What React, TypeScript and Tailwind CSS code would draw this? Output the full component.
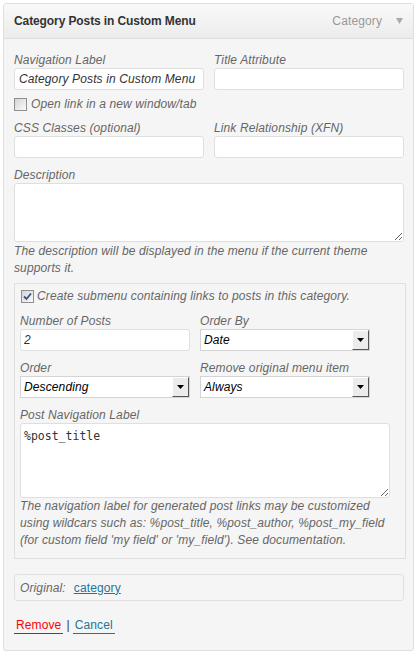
import React from "react";

function Checkbox({ checked }: { checked?: boolean }) {
  return (
    <span className="inline-flex w-[13px] h-[13px] shrink-0 border border-[#8e8f8f] bg-gradient-to-br from-[#d4d4d4] to-[#fbfbfb] items-center justify-center">
      {checked && (
        <svg width="9" height="9" viewBox="0 0 9 9">
          <path d="M1 4.5 L3.5 7 L8 1.5" fill="none" stroke="#3c4d8f" strokeWidth="1.8" />
        </svg>
      )}
    </span>
  );
}

function TextInput({ value, className = "" }: { value?: string; className?: string }) {
  return (
    <input
      readOnly
      defaultValue={value}
      className={`h-[22px] border border-[#dfdfdf] rounded-[3px] bg-white px-[3px] text-[12px] italic text-[#333] outline-none ${className}`}
    />
  );
}

function Select({ value }: { value: string }) {
  return (
    <div className="h-[22px] w-[170px] flex border border-[#d4d4d4] bg-white">
      <span className="flex-1 pl-[3px] leading-[20px] italic text-[12px] text-black">{value}</span>
      <span className="w-[17px] h-full bg-[#ececec] border-t border-l border-t-white border-l-white border-r border-b border-r-[#555] border-b-[#555] flex items-center justify-center">
        <svg width="7" height="4" viewBox="0 0 7 4">
          <path d="M0 0 H7 L3.5 4 Z" fill="#000" />
        </svg>
      </span>
    </div>
  );
}

function Label({ children }: { children: React.ReactNode }) {
  return <div className="text-[12px] leading-[16px] italic text-[#666]">{children}</div>;
}

export default function App() {
  return (
    <div
      className="w-[419px] h-[654px] bg-white pt-[3px] pl-[3px] tracking-[0.12px]"
      style={{ fontFamily: '"Liberation Sans", Arial, sans-serif' }}
    >
      <div className="w-[411px] h-[648px] border border-[#dfdfdf] rounded-[3px] bg-[#f5f5f5] flex flex-col overflow-hidden">
        <div className="h-[35px] shrink-0 border-b border-[#dfdfdf] bg-gradient-to-b from-[#f9f9f9] to-[#ececec] flex items-center justify-between pl-[10px] pr-[10px] pb-[1px]">
          <span className="text-[12px] font-bold text-[#333] tracking-[-0.1px]">Category Posts in Custom Menu</span>
          <span className="flex items-center gap-[14px] text-[12px] text-[#999]">
            Category
            <svg width="7" height="6" viewBox="0 0 7 6">
              <path d="M0 0 H7 L3.5 6 Z" fill="#aaa" />
            </svg>
          </span>
        </div>
        <div className="px-[10px] pt-[13px] flex flex-col">
          <div className="grid grid-cols-[190px_190px] gap-x-[10px]">
            <div className="flex flex-col">
              <Label>Navigation Label</Label>
              <TextInput value="Category Posts in Custom Menu" className="px-[4px]" />
            </div>
            <div className="flex flex-col">
              <Label>Title Attribute</Label>
              <TextInput />
            </div>
          </div>
          <div className="mt-[6px] h-[16px] flex items-center gap-[4px]">
            <Checkbox />
            <span className="text-[12px] italic text-[#666]">Open link in a new window/tab</span>
          </div>
          <div className="mt-[8px] grid grid-cols-[190px_190px] gap-x-[10px]">
            <div className="flex flex-col">
              <Label>CSS Classes (optional)</Label>
              <TextInput />
            </div>
            <div className="flex flex-col">
              <Label>Link Relationship (XFN)</Label>
              <TextInput />
            </div>
          </div>
          <div className="mt-[9px]">
            <Label>Description</Label>
          </div>
          <textarea
            readOnly
            className="w-[390px] h-[59px] border border-[#dfdfdf] rounded-[3px] bg-white outline-none block"
          />
          <div className="mt-[1px] w-[390px] text-[12px] leading-[17px] italic text-[#666]">
            The description will be displayed in the menu if the current theme supports it.
          </div>

          <div className="mt-[6px] w-[392px] border border-[#dfdfdf] pl-[5px] pt-[4px] pb-[9px] flex flex-col">
            <div className="h-[16px] flex items-center gap-[3px] pl-[1px]">
              <Checkbox checked />
              <span className="text-[12px] italic text-[#666]">
                Create submenu containing links to posts in this category.
              </span>
            </div>
            <div className="mt-[9px] grid grid-cols-[170px_170px] gap-x-[10px]">
              <div className="flex flex-col">
                <Label>Number of Posts</Label>
                <TextInput value="2" className="w-[170px]" />
              </div>
              <div className="flex flex-col">
                <Label>Order By</Label>
                <Select value="Date" />
              </div>
            </div>
            <div className="mt-[9px] grid grid-cols-[170px_170px] gap-x-[10px]">
              <div className="flex flex-col">
                <Label>Order</Label>
                <Select value="Descending" />
              </div>
              <div className="flex flex-col">
                <Label>Remove original menu item</Label>
                <Select value="Always" />
              </div>
            </div>
            <div className="mt-[9px]">
              <Label>Post Navigation Label</Label>
            </div>
            <textarea
              readOnly
              defaultValue="%post_title"
              className="w-[370px] h-[75px] border border-[#dfdfdf] rounded-[3px] bg-white outline-none block px-[3px] pt-[5px] text-[11.5px] leading-[14px] text-[#333] tracking-normal"
              style={{ fontFamily: '"DejaVu Sans Mono", "Liberation Mono", monospace' }}
            />
            <div className="w-[372px] text-[12px] leading-[17px] italic text-[#666]">
              The navigation label for generated post links may be customized using wildcars such as: %post_title, %post_author, %post_my_field (for custom field 'my field' or 'my_field'). See documentation.
            </div>
          </div>

          <div className="mt-[15px] w-[390px] h-[27px] border border-[#dfdfdf] rounded-[3px] pl-[5px] flex items-center text-[12px]">
            <span className="italic text-[#666]">Original:</span>
            <a className="ml-[8px] text-[#21759b] underline">category</a>
          </div>

          <div className="mt-[16px] flex items-start text-[12px] leading-[16px]">
            <a className="px-[2px] text-[#f00] border-b border-[#f00]">Remove</a>
            <span className="mx-[3px] text-[#333]">|</span>
            <a className="px-[2px] text-[#21759b] border-b border-[#21759b]">Cancel</a>
          </div>
        </div>
      </div>
    </div>
  );
}
